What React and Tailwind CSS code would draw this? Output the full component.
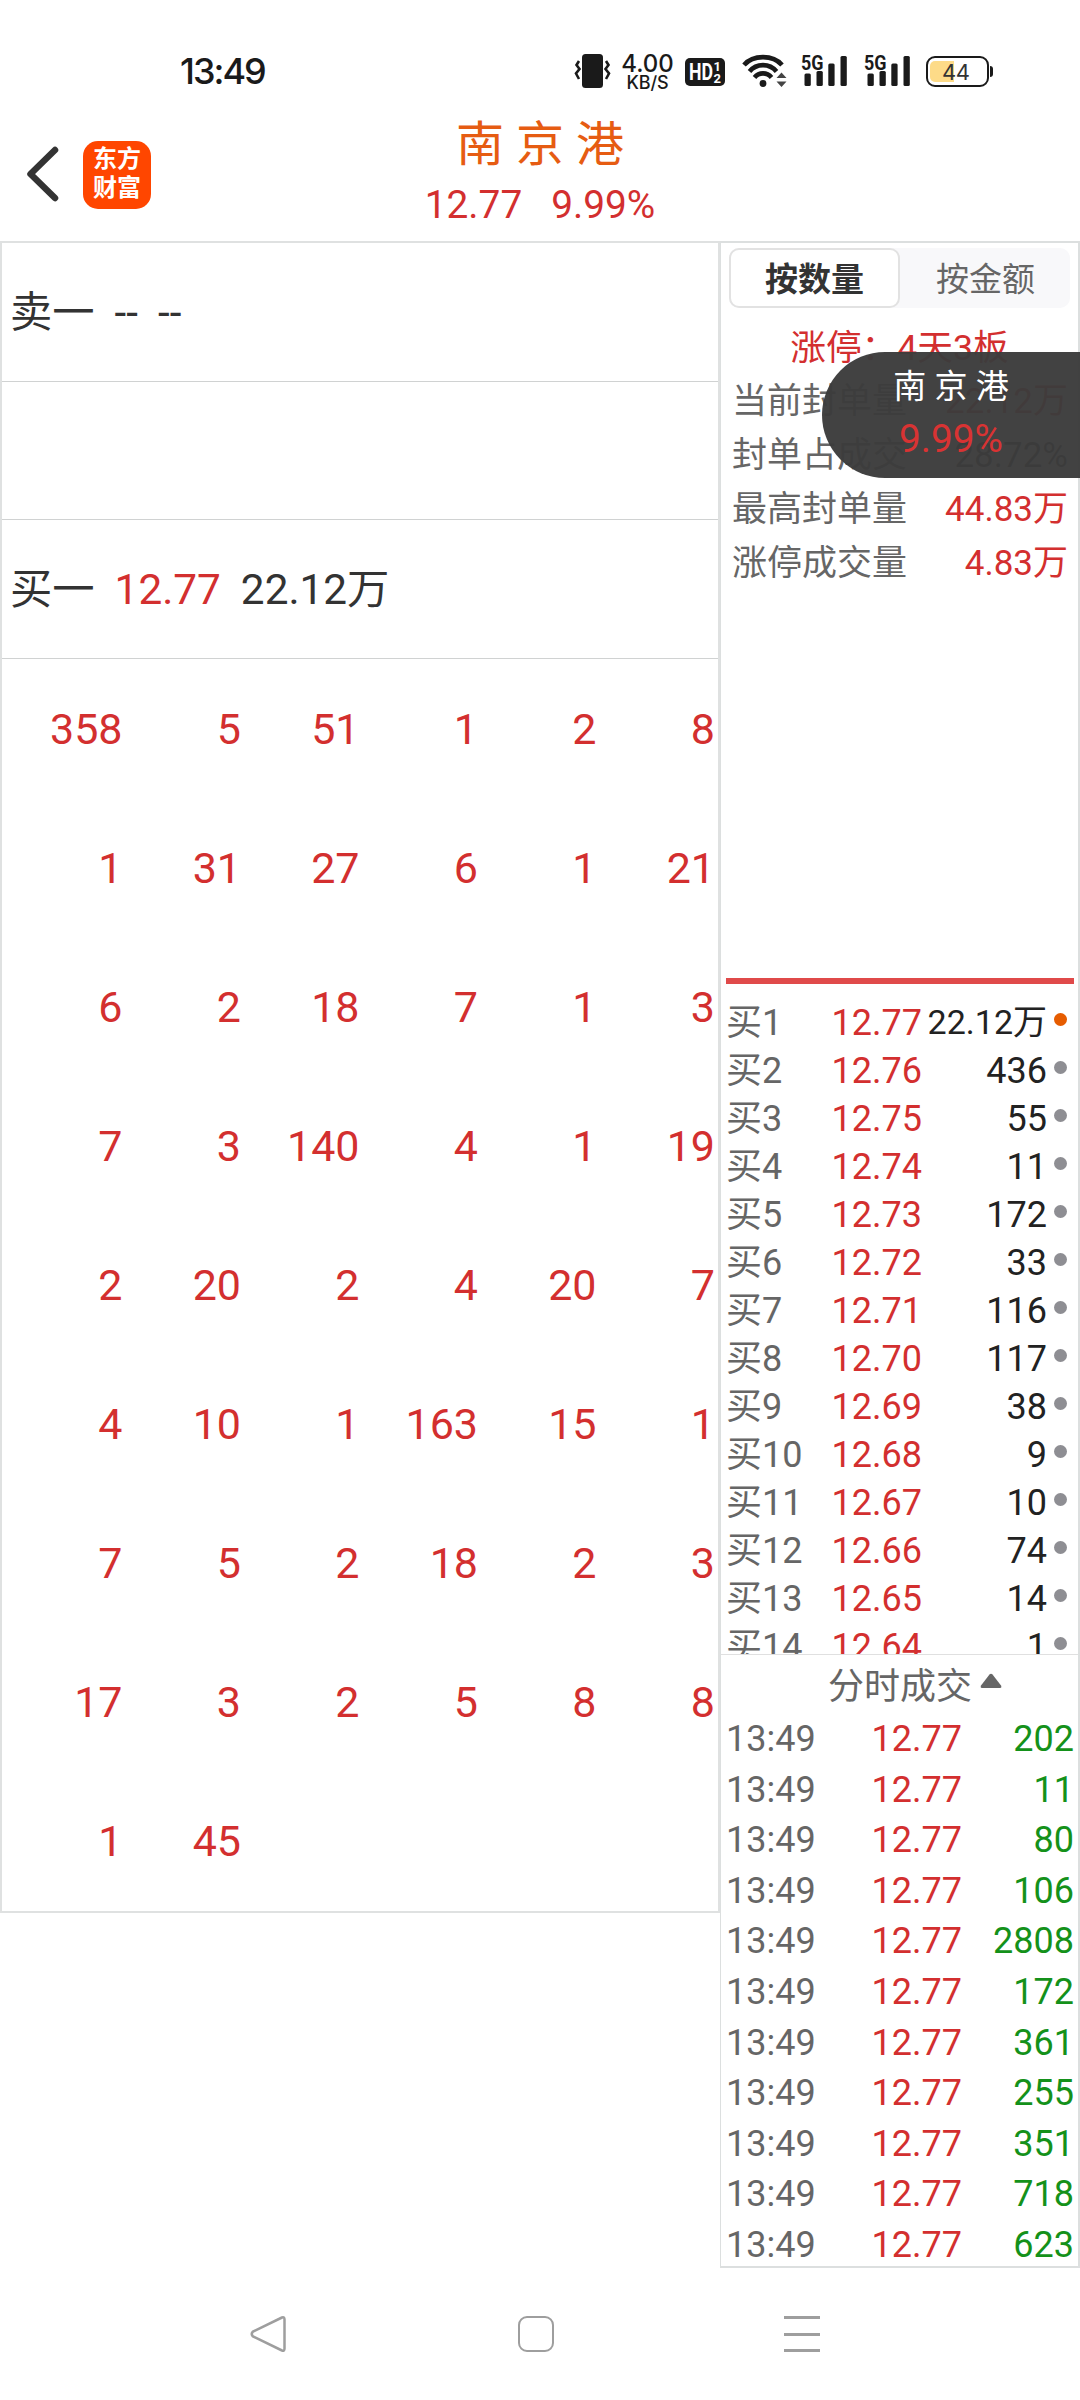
const DEPTH = [
  [358, 5, 51, 1, 2, 8],
  [1, 31, 27, 6, 1, 21],
  [6, 2, 18, 7, 1, 3],
  [7, 3, 140, 4, 1, 19],
  [2, 20, 2, 4, 20, 7],
  [4, 10, 1, 163, 15, 1],
  [7, 5, 2, 18, 2, 3],
  [17, 3, 2, 5, 8, 8],
  [1, 45],
];

const BIDS = [
  ["12.77", "22.12万"],
  ["12.76", "436"],
  ["12.75", "55"],
  ["12.74", "11"],
  ["12.73", "172"],
  ["12.72", "33"],
  ["12.71", "116"],
  ["12.70", "117"],
  ["12.69", "38"],
  ["12.68", "9"],
  ["12.67", "10"],
  ["12.66", "74"],
  ["12.65", "14"],
  ["12.64", "1"],
];

const TRADES = [202, 11, 80, 106, 2808, 172, 361, 255, 351, 718, 623];

const STATS = [
  ["当前封单量", "22.12万", "text-[#d32f2f]"],
  ["封单占成交", "28.72%", "text-[#333333]"],
  ["最高封单量", "44.83万", "text-[#d32f2f]"],
  ["涨停成交量", "4.83万", "text-[#d32f2f]"],
];

function Signal() {
  return (
    <svg className="overflow-visible" width="46" height="34" viewBox="0 0 46 34" fill="#1a1a1a">
      <text x="0" y="16.500" fontSize="21" fontWeight="700" textLength="22.500" lengthAdjust="spacingAndGlyphs">5G</text>
      <rect x="3.500" y="20.500" width="6.300" height="12.500" rx="1.500" />
      <rect x="15.500" y="18" width="6.300" height="15" rx="1.500" />
      <rect x="27.300" y="10.500" width="6.300" height="22.500" rx="1.500" />
      <rect x="39.500" y="3" width="6.300" height="30" rx="1.500" />
    </svg>
  );
}

function StatusBar() {
  return (
    <div className="flex h-[112px] items-start pt-[53px] pl-[180px] text-[#1a1a1a]">
      <div className="mt-[-2px] w-[393px] font-[Inter] text-[36px] leading-[40px] font-medium tracking-[-2px]">13:49</div>
      <svg className="ml-[1px]" width="38" height="36" viewBox="0 0 38 36" fill="none" stroke="#1a1a1a" strokeWidth="2.600">
        <rect x="8" y="1" width="21" height="34" rx="3.500" fill="#1a1a1a" stroke="none" />
        <path d="M5 8 L2.500 12 L5.500 16 L2 20.500 L5 26 M32 8 L34.500 12 L31.500 16 L35 20.500 L32 26" />
      </svg>
      <div className="ml-[9px] w-[53px] text-center font-[Inter] font-medium">
        <div className="text-[24px] leading-[21px]">4.00</div>
        <div className="text-[18px] leading-[18px] tracking-[-0.1px]">KB/S</div>
      </div>
      <svg className="ml-[11px] overflow-visible" width="40" height="36" viewBox="0 0 40 36" fill="#fff" fontWeight="700">
        <rect x="0" y="5" width="40" height="28" rx="5" fill="#1a1a1a" />
        <text x="4" y="27" fontSize="23" textLength="24" lengthAdjust="spacingAndGlyphs">HD</text>
        <text x="28.500" y="18" fontSize="13">1</text>
        <text x="28.500" y="30" fontSize="13">2</text>
      </svg>
      <svg className="ml-[17px]" width="46" height="36" viewBox="0 0 46 36" fill="none" stroke="#1a1a1a" strokeWidth="4.600">
        <path d="M2 12 C11 1.500 31 1.500 40 12" />
        <path d="M7.500 18.500 C14.500 10 27.500 10 34.500 18.500" />
        <path d="M12.500 24.500 C17 19 25 19 29.500 24.500" />
        <circle cx="21" cy="30.500" r="3.400" fill="#1a1a1a" stroke="none" />
        <path d="M34.500 25 L39.500 19.500 L44.500 25 Z M34.500 28.500 L39.500 34 L44.500 28.500 Z" fill="#444" stroke="none" />
      </svg>
      <div className="ml-[13px] flex gap-[17px]">
        <Signal />
        <Signal />
      </div>
      <div className="mt-[3px] ml-[16px] flex items-center">
        <div className="flex h-[31px] w-[63px] items-center rounded-[9px] border-[2.5px] border-[#1a1a1a] pl-[2px]">
          <div className="h-[21px] w-[24px] rounded-l-[5px] bg-[#fddb88]" />
          <div className="ml-[-12px] font-[Inter] text-[22px] leading-[24px] tracking-[-0.5px] text-[#333]">44</div>
        </div>
        <div className="ml-[1px] h-[11px] w-[3px] rounded-r-sm bg-[#1a1a1a]" />
      </div>
    </div>
  );
}

function Header() {
  return (
    <div className="flex h-[129px]">
      <div className="flex w-[423px] items-start pt-[29px] pl-[26px]">
        <svg className="mt-[4px]" width="34" height="58" viewBox="0 0 34 58" fill="none" stroke="#333333" strokeWidth="6.500" strokeLinecap="round" strokeLinejoin="round">
          <path d="M29 5 L4.500 29 L29 53" />
        </svg>
        <div className="ml-[23px] flex h-[68px] w-[68px] flex-col items-center justify-center rounded-[15px] bg-[#ff4600] pb-[2px] text-[24px] leading-[29px] font-bold text-white">
          <div>东方</div>
          <div>财富</div>
        </div>
      </div>
      <div className="flex w-[234px] flex-col items-center pt-[3px]">
        <div className="text-[48px] leading-[60px] whitespace-nowrap text-[#e65c12]">南 京 港</div>
        <div className="flex gap-[29px] text-[38.8px] leading-[60px] whitespace-nowrap text-[#d32f2f]">
          <span>12.77</span>
          <span>9.99%</span>
        </div>
      </div>
    </div>
  );
}

function OrderPanel() {
  return (
    <div className="h-[1672px] w-[720px] border-2 border-[#dfe1e1] text-[42.3px] text-[#333333]">
      <div className="flex h-[139px] items-center gap-5 border-b border-[#d0d2d2] pt-[2px] pl-[8px]">
        <span>卖一</span>
        <span>--</span>
        <span>--</span>
      </div>
      <div className="h-[138px] border-b border-[#d0d2d2]" />
      <div className="flex h-[139px] items-center gap-5 border-b border-[#d0d2d2] pt-[2px] pl-[8px]">
        <span>买一</span>
        <span className="text-[#d32f2f]">12.77</span>
        <span>22.12万</span>
      </div>
      <div className="mr-[3px] grid grid-cols-6 pt-[1px] pl-[2px] text-right text-[43px] leading-[139px] text-[#d32f2f]">
        {DEPTH.flat().map((n, i) => (
          <div key={i}>{n}</div>
        ))}
      </div>
    </div>
  );
}

function Tabs() {
  return (
    <div className="mx-[8px] mt-[5px] flex h-[60px] rounded-[10px] bg-[#f8f8fa] text-[33px] leading-[64px]">
      <div className="w-[171px] rounded-[10px] border-2 border-[#e2e2e2] bg-white text-center leading-[60px] font-bold text-[#333333]">按数量</div>
      <div className="flex-1 pl-[1px] text-center text-[#666666]">按金额</div>
    </div>
  );
}

function SidePanel() {
  return (
    <div className="h-[2027px] w-[360px] border-t-2 border-r-2 border-b-2 border-l border-[#dcdfdf] text-[#666666]">
      <Tabs />
      <div className="mt-[13px] text-center text-[35.7px] leading-[54px] whitespace-nowrap text-[#d32f2f]">涨停：4天3板</div>
      <div className="pr-[10px] pl-[11px] text-[35px] leading-[54px]">
        {STATS.map(([label, value, color]) => (
          <div key={label} className="flex justify-between">
            <span>{label}</span>
            <span className={color}>{value}</span>
          </div>
        ))}
      </div>
      <div className="mr-[4px] ml-[5px] mt-[387px] h-[6px] bg-[#e04a4a]" />
      <div className="mt-[14px] h-[657px] overflow-hidden border-b border-[#e0e0e0] pt-[1px] pr-[11px] pl-[5px] text-[36px] leading-[48px]">
        {BIDS.map(([price, vol], i) => (
          <div key={price} className="flex h-[48px] items-center">
            <div className="w-[100px] whitespace-nowrap">买{i + 1}</div>
            <div className="w-[96px] text-right text-[#d32f2f]">{price}</div>
            <div className={i === 0 ? "mt-[-2px] flex-1 pr-[7px] text-right text-[34px] whitespace-nowrap text-[#222222]" : "flex-1 pr-[7px] text-right text-[#222222]"}>{vol}</div>
            <div className={i === 0 ? "mt-[-8px] h-[13px] w-[13px] rounded-full bg-[#e65c00]" : "mt-[-8px] h-[13px] w-[13px] rounded-full bg-[#8e8e93]"} />
          </div>
        ))}
      </div>
      <div className="flex h-[59px] items-center pl-[107px]">
        <span className="mt-[4px] text-[36px]">分时成交</span>
        <svg className="mt-[-8px] ml-[8px]" width="22" height="16" viewBox="0 0 22 16" fill="#666666">
          <path d="M9.500 1.500 Q11 0 12.500 1.500 L21 12.500 Q22 15 20 15 L2 15 Q0 15 1 12.500 Z" />
        </svg>
      </div>
      <div className="pr-[4px] pl-[5px] text-[36px] leading-[50.6px]">
        {TRADES.map((vol, i) => (
          <div key={i} className="flex h-[50.6px]">
            <div className="w-[110px]">13:49</div>
            <div className="w-[126px] text-right text-[#d32f2f]">12.77</div>
            <div className="flex-1 text-right text-[#14911a]">{vol}</div>
          </div>
        ))}
      </div>
    </div>
  );
}

function NavBar() {
  return (
    <div className="flex h-[132px] items-center pl-[249px]">
      <svg width="38" height="40" viewBox="0 0 38 40" fill="none" stroke="#9e9e9e" strokeWidth="2.500">
        <path d="M33 3.500 L4 17.500 Q1.500 20 4 22.500 L33 36.500 Q35.500 37.500 35.500 34.500 L35.500 5.500 Q35.500 2.500 33 3.500 Z" />
      </svg>
      <div className="ml-[231px] h-[36px] w-[36px] rounded-[9px] border-[2.5px] border-[#9e9e9e]" />
      <div className="ml-[230px] flex h-[36px] w-[36px] flex-col justify-between">
        <div className="h-[3px] bg-[#9e9e9e]" />
        <div className="h-[3px] bg-[#9e9e9e]" />
        <div className="h-[3px] bg-[#9e9e9e]" />
      </div>
    </div>
  );
}

export default function App() {
  return (
    <div className="relative h-[2400px] w-[1080px] overflow-hidden bg-white font-[Roboto,'Noto_Sans_CJK_SC',sans-serif]">
      <StatusBar />
      <Header />
      <div className="flex items-start">
        <OrderPanel />
        <SidePanel />
      </div>
      <NavBar />
      <div className="absolute top-[352px] right-0 flex h-[126px] w-[258px] flex-col items-center rounded-l-full bg-[#3c3c3c]/97 pt-[8px]">
        <div className="text-[33px] leading-[54px] whitespace-nowrap text-white">南 京 港</div>
        <div className="text-[38.8px] leading-[50px] text-[#d83333]">9.99%</div>
      </div>
    </div>
  );
}
